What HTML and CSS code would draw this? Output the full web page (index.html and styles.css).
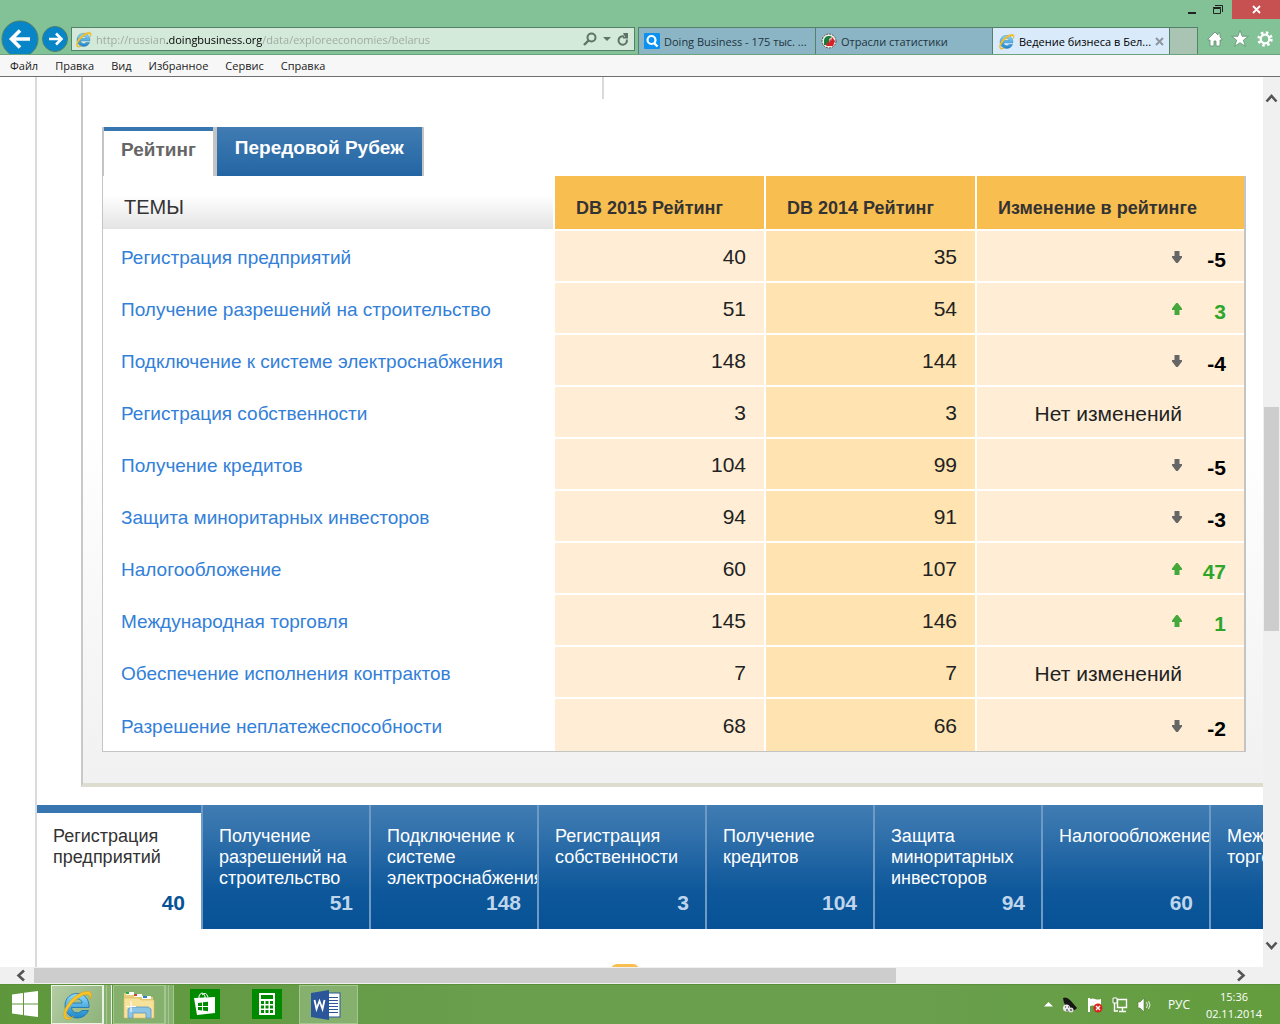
FILE: index.html
```html
<!DOCTYPE html>
<html lang="ru">
<head>
<meta charset="utf-8">
<title>Ведение бизнеса в Беларуси</title>
<link rel="stylesheet" href="styles.css">
</head>
<body>
<svg class="defs" aria-hidden="true">
  <defs>
    <linearGradient id="blueE" x1="0" y1="0" x2="0" y2="1"><stop offset="0" stop-color="#8fdcf9"/><stop offset="1" stop-color="#1c86cc"/></linearGradient>
    <symbol id="ie" viewBox="0 0 32 32">
      <path d="M16 4.500C9 4.500 4 9.800 4 16.500 4 23.500 9 29 16 29c5.500 0 9.600-3 11.400-7.500h-6.600c-1 1.500-2.600 2.300-4.700 2.300-3.200 0-5.300-2-5.600-5.300H28C28.600 10.500 23.500 4.500 16 4.500zM10.600 14c.6-2.800 2.600-4.300 5.300-4.300 2.800 0 4.800 1.600 5.200 4.300z" fill="url(#blueE)" stroke="#1670b0" stroke-width=".8"/>
      <path d="M4.500 30C1 27 3 18 10.500 10.500 17.500 3.500 27 .5 29.500 3.500c1.500 1.800 1 4.500-.6 7.500.4-2.600.2-4.300-.9-5C25 4 18 7.500 12 13.500 6 19.800 3.500 26 6 28.300c1.500 1.200 4.200.4 7-1.300-3.300 3.200-6.700 4.400-8.500 3z" fill="#fcc526" stroke="#d99a12" stroke-width=".5"/>
    </symbol>
    <symbol id="down" viewBox="0 0 10 12"><path d="M2.500 0h5v5H10v1.500L5.800 12H4.200L0 6.500V5h2.500z" fill="#666"/></symbol>
    <symbol id="up" viewBox="0 0 10 12"><path d="M4.200 0h1.600L10 5.500V7H7.500v5h-5V7H0V5.500z" fill="#45a83b"/></symbol>
  </defs>
</svg>
<div class="screen">
  <header class="titlebar">
    <div class="window-buttons">
      <button class="win" aria-label="Свернуть"><svg width="10" height="14"><path d="M1 10h8" stroke="#222" stroke-width="2"/></svg></button>
      <button class="win" aria-label="Восстановить"><svg width="12" height="12"><path d="M1.500 4.500h7v5h-7zM1 3.500h8M3 1.500h7.500V8" fill="none" stroke="#222"/></svg></button>
      <button class="win win-close" aria-label="Закрыть"><svg width="9" height="9"><path d="M1 1l7 7M8 1L1 8" stroke="#fff" stroke-width="1.800"/></svg></button>
    </div>
    <div class="navrow">
      <div class="history">
        <button class="plain" aria-label="Назад"><svg width="38" height="34"><circle cx="19" cy="19" r="18" fill="#0785c6" stroke="#4c7f6c"/><path d="M29 19H11M19 10.500L10.500 19l8.500 8.500" fill="none" stroke="#fff" stroke-width="3.600"/></svg></button>
        <button class="plain" aria-label="Вперёд"><svg width="26" height="34"><circle cx="13" cy="19" r="12.500" fill="#0785c6" stroke="#4c7f6c"/><path d="M7 19h12M14 13.500l5.500 5.500-5.500 5.500" fill="none" stroke="#fff" stroke-width="2.600"/></svg></button>
      </div>
      <div class="address">
        <svg width="17" height="17"><use href="#ie"/></svg>
        <input class="url" type="text" aria-label="Адрес" value="http://russian.doingbusiness.org/data/exploreeconomies/belarus">
        <button class="plain" aria-label="Поиск"><svg width="14" height="14"><circle cx="8.500" cy="5.500" r="4" fill="none" stroke="#5f7366" stroke-width="2"/><path d="M5.500 8.500L1 13" stroke="#5f7366" stroke-width="2.400"/></svg></button>
        <button class="plain" aria-label="Список адресов"><svg width="8" height="5"><path d="M0 0h8L4 4z" fill="#5f7366"/></svg></button>
        <button class="plain" aria-label="Обновить"><svg width="12" height="13"><path d="M9.800 6.500a4.200 4.200 0 1 1-2.800-3" fill="none" stroke="#5f7366" stroke-width="2"/><path d="M6 0h5v5.500H6V4h2z" fill="#5f7366"/></svg></button>
      </div>
      <nav class="browser-tabs">
        <button class="btab"><svg width="16" height="16"><rect width="16" height="16" rx="1" fill="#0a91f2"/><circle cx="7.500" cy="7" r="4" fill="none" stroke="#fff" stroke-width="2.200"/><path d="M10 10l3.500 3.500" stroke="#fff" stroke-width="2.400"/></svg>Doing Business - 175 тыс. ...</button>
        <button class="btab"><svg width="16" height="16"><circle cx="8" cy="8" r="7" fill="#f3ede2" stroke="#555" stroke-dasharray="2 1"/><path d="M3 12V7a5 5 0 0 1 8-3L8 6v6z" fill="#12803c"/><path d="M5 13l2-5 1 2 1-5 1 3 1-4 3 4-2 5z" fill="#d4212c"/></svg>Отрасли статистики</button>
        <button class="btab btab-on"><svg width="17" height="17"><use href="#ie"/></svg>Ведение бизнеса в Бел...<svg width="9" height="9"><path d="M1 1l7 7M8 1L1 8" stroke="#8d979f" stroke-width="2"/></svg></button>
        <button class="btab btab-new" aria-label="Новая вкладка"></button>
      </nav>
      <div class="tools">
        <button class="plain" aria-label="Домой"><svg width="16" height="16"><path d="M8 1L1 8v1h2v6h4v-5h2v5h4V9h2V8l-2-2V2h-2v2z" fill="#fff" stroke="#5f8f70" stroke-width=".8"/></svg></button>
        <button class="plain" aria-label="Избранное"><svg width="18" height="17"><path d="M9 .5l2.200 5.800h6.200l-5 3.900 1.900 6.100L9 12.700l-5.300 3.600 1.900-6.100-5-3.900h6.200z" fill="#fff" stroke="#5f8f70" stroke-width=".8"/></svg></button>
        <button class="plain" aria-label="Сервис"><svg width="16" height="16"><circle cx="8" cy="8" r="6.300" fill="none" stroke="#fff" stroke-width="2.800" stroke-dasharray="2.480 2.480"/><circle cx="8" cy="8" r="4.300" fill="none" stroke="#fff" stroke-width="2.200"/></svg></button>
      </div>
    </div>
  </header>
  <nav class="menubar">
    <button>Файл</button><button>Правка</button><button>Вид</button><button>Избранное</button><button>Сервис</button><button>Справка</button>
  </nav>

  <div class="viewport">
    <main class="page">
      <section class="panel">
        <div class="divider"></div>
        <div class="tabs" role="tablist">
          <button class="tab tab-on" role="tab" aria-selected="true">Рейтинг</button>
          <button class="tab" role="tab" aria-selected="false">Передовой Рубеж</button>
        </div>
        <table class="ranks">
          <thead>
            <tr><th class="topic" scope="col">ТЕМЫ</th><th class="c-year" scope="col">DB 2015 Рейтинг</th><th class="c-year" scope="col">DB 2014 Рейтинг</th><th class="c-change" scope="col">Изменение в рейтинге</th></tr>
          </thead>
          <tbody>
            <tr><td><a href="#starting">Регистрация предприятий</a></td><td>40</td><td>35</td><td><div class="change"><svg><use href="#down"/></svg><b>-5</b></div></td></tr>
            <tr><td><a href="#permits">Получение разрешений на строительство</a></td><td>51</td><td>54</td><td><div class="change rise"><svg><use href="#up"/></svg><b>3</b></div></td></tr>
            <tr><td><a href="#electricity">Подключение к системе электроснабжения</a></td><td>148</td><td>144</td><td><div class="change"><svg><use href="#down"/></svg><b>-4</b></div></td></tr>
            <tr><td><a href="#property">Регистрация собственности</a></td><td>3</td><td>3</td><td class="same">Нет изменений</td></tr>
            <tr><td><a href="#credit">Получение кредитов</a></td><td>104</td><td>99</td><td><div class="change"><svg><use href="#down"/></svg><b>-5</b></div></td></tr>
            <tr><td><a href="#investors">Защита миноритарных инвесторов</a></td><td>94</td><td>91</td><td><div class="change"><svg><use href="#down"/></svg><b>-3</b></div></td></tr>
            <tr><td><a href="#taxes">Налогообложение</a></td><td>60</td><td>107</td><td><div class="change rise"><svg><use href="#up"/></svg><b>47</b></div></td></tr>
            <tr><td><a href="#trade">Международная торговля</a></td><td>145</td><td>146</td><td><div class="change rise"><svg><use href="#up"/></svg><b>1</b></div></td></tr>
            <tr><td><a href="#contracts">Обеспечение исполнения контрактов</a></td><td>7</td><td>7</td><td class="same">Нет изменений</td></tr>
            <tr><td><a href="#insolvency">Разрешение неплатежеспособности</a></td><td>68</td><td>66</td><td><div class="change"><svg><use href="#down"/></svg><b>-2</b></div></td></tr>
          </tbody>
        </table>
      </section>
      <nav class="topics">
        <a class="card card-on" href="#starting"><span>Регистрация предприятий</span><b>40</b></a>
        <a class="card" href="#permits"><span>Получение разрешений на строительство</span><b>51</b></a>
        <a class="card" href="#electricity"><span>Подключение к системе электроснабжения</span><b>148</b></a>
        <a class="card" href="#property"><span>Регистрация собственности</span><b>3</b></a>
        <a class="card" href="#credit"><span>Получение кредитов</span><b>104</b></a>
        <a class="card" href="#investors"><span>Защита миноритарных инвесторов</span><b>94</b></a>
        <a class="card" href="#taxes"><span>Налогообложение</span><b>60</b></a>
        <a class="card" href="#trade"><span>Международная торговля</span><b>145</b></a>
      </nav>
      <div class="pager"></div>
    </main>
    <div class="vscroll">
      <svg width="13" height="17"><path d="M1.500 12.500L6.500 7l5 5.500" fill="none" stroke="#555" stroke-width="2.600"/></svg>
      <div class="vtrack"><div class="vthumb"></div></div>
      <svg width="13" height="17"><path d="M1.500 4.500L6.500 10l5-5.500" fill="none" stroke="#555" stroke-width="2.600"/></svg>
    </div>
    <div class="hscroll">
      <svg width="18" height="13"><path d="M12 1.500L6.500 6.500l5.500 5" fill="none" stroke="#555" stroke-width="2.600"/></svg>
      <div class="htrack"><div class="hthumb"></div></div>
      <svg width="18" height="13"><path d="M6 1.500l5.500 5L6 11.500" fill="none" stroke="#555" stroke-width="2.600"/></svg>
    </div>
  </div>

  <footer class="taskbar">
    <button class="start" aria-label="Пуск"><svg width="28" height="26"><path d="M1 3.500L12 2v10.500H1zM13 1.800L27 0v12.500H13zM1 13.500h11V24L1 22.500zM13 13.500h14V26l-14-1.800z" fill="#fff"/></svg></button>
    <button class="task task-on stack" aria-label="Internet Explorer"><svg width="32" height="32"><use href="#ie"/></svg></button>
    <button class="task stack" aria-label="Проводник"><svg width="32" height="32" viewBox="0 0 32 32"><path d="M1 4h9l1 2h8l1 2h10v20H1z" fill="#e8cc78"/><path d="M3 3h8v3H3z" fill="#fff"/><path d="M3 3h3v2H3z" fill="#2ba93a"/><path d="M11 5h8v3h-8z" fill="#fff"/><path d="M11 5h3v2h-3z" fill="#c9432f"/><path d="M19 7h9v3h-9z" fill="#fff"/><path d="M20 7h4v2h-4z" fill="#2a7fd0"/><path d="M1 9h15l2 2h13v18H1z" fill="#f7e29b" stroke="#dcb95c" stroke-width=".6"/><path d="M5 29v-9l3-2h17l3 2v9h-5v-5H10v5z" fill="#8cc4e6" stroke="#5b97bf" stroke-width=".8"/><path d="M8 12v11M3 17.500h10" stroke="#fff"/></svg></button>
    <button class="tile" aria-label="Магазин"><svg width="30" height="30"><rect width="30" height="30" fill="#008a00"/><path d="M4 9l21-1v16L7 26z" fill="#fff"/><path d="M9 10V7q3-6 6 0v2M12 6q4-4 6 2" fill="none" stroke="#fff"/><path d="M8 14l4-.5V17H8zM13 13.300l5-.6V17h-5zM8 18h4v3.500L8 21zM13 18h5v4.200l-5-.6z" fill="#008a00"/></svg></button>
    <button class="tile" aria-label="Калькулятор"><svg width="30" height="30"><rect width="30" height="30" fill="#008a00"/><rect x="7" y="4" width="16" height="22" fill="#fff"/><path d="M9 6h12v4H9zM9 12h3v3H9zM13.500 12h3v3h-3zM18 12h3v3h-3zM9 16.500h3v3H9zM13.500 16.500h3v3h-3zM18 16.500h3v3h-3zM9 21h3v3H9zM13.500 21h3v3h-3zM18 21h3v3h-3z" fill="#008a00"/></svg></button>
    <button class="task task-word" aria-label="Word"><svg width="32" height="32"><rect x="17" y="4" width="13" height="24" fill="#fff" stroke="#2b579a"/><path d="M19 8.500h9M19 11.500h9M19 14.500h9M19 17.500h9M19 20.500h9M19 23.500h9" stroke="#2b579a"/><path d="M1 4l18-3v30L1 28z" fill="#2b579a"/><path d="M4.500 11l2 9 3-8 3 8 2-9" fill="none" stroke="#fff" stroke-width="1.800"/></svg></button>
    <div class="tray">
      <svg width="9" height="5"><path d="M0 4.500L4.500 0 9 4.500z" fill="#fff"/></svg>
      <svg width="16" height="16"><path d="M1 1q4-2 8 3l6 7q-3 4-8 1Q2 9 1 1z" fill="#161616"/><circle cx="4.500" cy="11" r="3.500" fill="#eee"/><circle cx="9" cy="13" r="2.500" fill="#ddd"/><path d="M3 10h1M6 10h1M4 13h2M8 13h2" stroke="#222"/></svg>
      <svg width="16" height="16"><path d="M2 1v14" stroke="#fff" stroke-width="2"/><path d="M3 2q3-1 5 0t6 0v7q-4 1-6 0t-5 0z" fill="#fff"/><circle cx="11" cy="11" r="4.500" fill="#d9261c"/><path d="M9 9l4 4M13 9l-4 4" stroke="#fff" stroke-width="1.400"/></svg>
      <svg width="16" height="16"><path d="M5.500 2.500h9v8h-9zM7 14.500h7M10.500 11v3M2.500 6v8H6" fill="none" stroke="#fff" stroke-width="1.400"/><path d="M1 1h4v5H1z" fill="#5a8a42" stroke="#fff"/></svg>
      <svg width="14" height="16"><path d="M1 5h2l4-4v14l-4-4H1z" fill="#fff" stroke="#4d7735" stroke-width=".6"/><path d="M9.500 5q2 3 0 6M11.500 4q3 4 0 8" fill="none" stroke="#e8f2e0"/></svg>
      <span class="lang">РУС</span>
      <time class="clock">15:36<br>02.11.2014</time>
    </div>
  </footer>
</div>
</body>
</html>
```
FILE: styles.css
```css
* { box-sizing: border-box; }
body { margin: 0; font-family: "Liberation Sans", Arial, sans-serif; color: #333; }
button { font: inherit; color: inherit; background: none; border: 0; padding: 0; margin: 0; }
svg { display: block; flex: none; }
a { text-decoration: none; }
.defs { position: absolute; width: 0; height: 0; }
.screen { display: flex; flex-direction: column; height: 100vh; overflow: hidden; background: #fff; }

.titlebar, .menubar, .taskbar { flex: none; font-family: "Open Sans", "Noto Sans", sans-serif; font-size: 11px; }
.titlebar { background: #83c197; border-bottom: 1px solid #6aa37e; }
.window-buttons { display: flex; justify-content: flex-end; height: 20px; }
.win { display: flex; align-items: center; justify-content: center; width: 26px; height: 19px; }
.win-close { width: 48px; margin-left: 1px; background: #c75050; }
.navrow { display: flex; height: 34px; }
.plain { display: flex; align-items: center; justify-content: center; flex: none; }
.history { display: flex; gap: 3px; width: 71px; padding-left: 1px; flex: none; }
.address { display: flex; align-items: center; gap: 6px; flex: 1 1 564px; min-width: 0; height: 24px; margin: 7px 3px 0 0; padding: 0 5px 0 3px; border: 1px solid #55806a; background: #d3e9d9; }
.url {
  flex: 1; min-width: 0; margin-left: -2px; border: 0; outline: 0; padding: 0; font: inherit;
  color: transparent; -webkit-text-fill-color: transparent;
  background: linear-gradient(90deg, #9da8a0 70px, #000 70px, #000 166px, #9da8a0 166px);
  -webkit-background-clip: text; background-clip: text;
}
.browser-tabs { display: flex; flex: 0 1 560px; min-width: 0; margin-top: 7px; }
.btab { display: flex; align-items: center; gap: 4px; flex: 1 1 177px; min-width: 0; padding: 0 4px 0 5px; border: solid #55806a; border-width: 1px 0 0 1px; background: #8bb5c5; color: #1d3440; white-space: nowrap; overflow: hidden; }
.btab-on { background: #d9ebfb; color: #000; }
.btab-new { flex: 0 0 29px; border-right-width: 1px; background: #a9c4b3; }
.tools { display: flex; align-items: center; gap: 8px; width: 82px; padding: 3px 0 0 9px; flex: none; }

.menubar { display: flex; gap: 17px; height: 22px; padding-left: 10px; background: #f7f7f7; border-bottom: 1px solid #6e6e6e; color: #1a1a1a; }

.viewport { display: grid; grid-template: minmax(0, 1fr) 17px / minmax(0, 1fr) 17px; flex: 1; min-height: 0; background: #f0f0f0; }
.page { overflow: hidden; padding-left: 35px; background: linear-gradient(90deg, #fff 35px, #dadada 35px, #dadada 37px, #fff 37px); }
.panel { margin-left: 46px; padding: 0 17px 31px 19px; border-left: 2px solid #c8c8c8; border-bottom: 4px solid #dcdccf; background: linear-gradient(#fff 50%, #f1f1f1); }
.divider { width: 2px; height: 22px; margin-left: 500px; background: #dadada; }

.tabs { display: flex; margin-top: 28px; }
.tab { height: 49px; padding: 0 18px 8px; border-right: 2px solid #c4c4c4; background: linear-gradient(#417cb3, #2365a3); color: #fff; font-size: 19px; font-weight: bold; }
.tab-on { padding: 0 17px 4px; border: solid #c4c4c4; border-width: 0 4px 0 2px; box-shadow: inset 0 4px #3876b1; background: #fff; color: #666; }

.ranks { width: 100%; table-layout: fixed; border-spacing: 0; border: solid #c4c4c4; border-width: 0 2px 1px 1px; background: #fff; }
.c-year { width: 211px; }
.c-change { width: 269px; }
.ranks th { height: 55px; padding: 12px 0 0 21px; text-align: left; font-size: 18px; border-left: 2px solid #fff; border-bottom: 2px solid #fff; background: #f9be50; }
.ranks .topic { padding-top: 10px; border-left: 0; font-size: 20px; font-weight: normal; background: linear-gradient(#fff 35%, #e4e4e4); }
.ranks td { height: 52px; padding: 2px 18px 0 0; text-align: right; font-size: 21px; color: #222; border-left: 2px solid #fff; border-bottom: 2px solid #fff; background: #ffeed5; }
.ranks td:nth-child(3) { background: #ffe3b0; }
.ranks td:first-child { padding: 4px 0 0 18px; border-left: 0; text-align: left; font-size: 19px; background: #fff; }
.ranks tr:last-child td { border-bottom: 0; }
.ranks td a { color: #3380d8; }
.ranks td.same { padding: 4px 62px 0 0; }
.change { display: flex; align-items: center; justify-content: flex-end; color: #000; }
.change svg { width: 10px; height: 12px; }
.change b { width: 44px; padding-top: 6px; }
.rise { color: #2fa52c; }

.topics { display: flex; height: 124px; margin: 18px 0 0 2px; overflow: hidden; }
.card { display: flex; flex-direction: column; justify-content: space-between; flex: none; width: 168px; padding: 21px 0 14px 16px; border-left: 2px solid #6e9bc6; overflow: hidden; background: linear-gradient(#417cb3, #3070ab 25%, #0d579a 70%, #075296); color: #fff; font-size: 18px; line-height: 21px; }
.card b { padding-right: 16px; text-align: right; font-size: 21px; line-height: 24px; color: #bfd5ec; }
.card-on { width: 164px; padding-top: 13px; border-left: 0; border-top: 8px solid #3876b1; background: #fff; color: #333; }
.card-on b { color: #075296; }
.pager { width: 28px; height: 12px; margin: 35px auto 0 576px; border-radius: 6px; background: #f9be50; }

.vscroll { display: flex; flex-direction: column; align-items: center; padding: 12px 0; }
.vtrack { display: flex; flex-direction: column; flex: 1; width: 15px; }
.vtrack::before { content: ""; flex: 301; }
.vtrack::after { content: ""; flex: 307; }
.vthumb { flex: 223; background: #cdcdcd; }
.hscroll { display: flex; align-items: center; padding: 0 13px 0 12px; }
.htrack { display: flex; flex: 1; height: 15px; padding-left: 4px; }
.htrack::after { content: ""; flex: 336; }
.hthumb { flex: 862; background: #cdcdcd; }

.taskbar { display: flex; height: 40px; border-top: 1px solid #5b9038; background: linear-gradient(90deg, #5e973b, #6a9f4e 40%, #6a9f4e 70%, #639d3d); color: #fff; }
.start { width: 51px; padding: 0 0 1px 11px; }
.task { display: flex; align-items: center; justify-content: center; width: 52px; border: 1px solid #a4c690; background: #86b06d; }
.stack { position: relative; margin-right: 10px; }
.stack::after { content: ""; position: absolute; top: -1px; bottom: -1px; left: 51px; width: 7px; border: solid #a4c690; border-width: 0 1px; background: linear-gradient(90deg, #86b06d 2px, #a4c690 2px, #a4c690 3px, #86b06d 3px); }
.task-on { background: linear-gradient(120deg, #b3cca4, #8fb37a); border-color: #e9f2e3; }
.task-on::after { border-color: #e9f2e3; }
.tile { width: 30px; padding-bottom: 1px; margin: 0 17px 0 15px; }
.task-word { width: 59px; padding-right: 6px; }
.tray { display: flex; align-items: center; gap: 9px; margin-left: auto; padding-right: 18px; }
.lang { width: 37px; padding-left: 8px; font-size: 12px; }
.clock { text-align: center; line-height: 17px; }
```
